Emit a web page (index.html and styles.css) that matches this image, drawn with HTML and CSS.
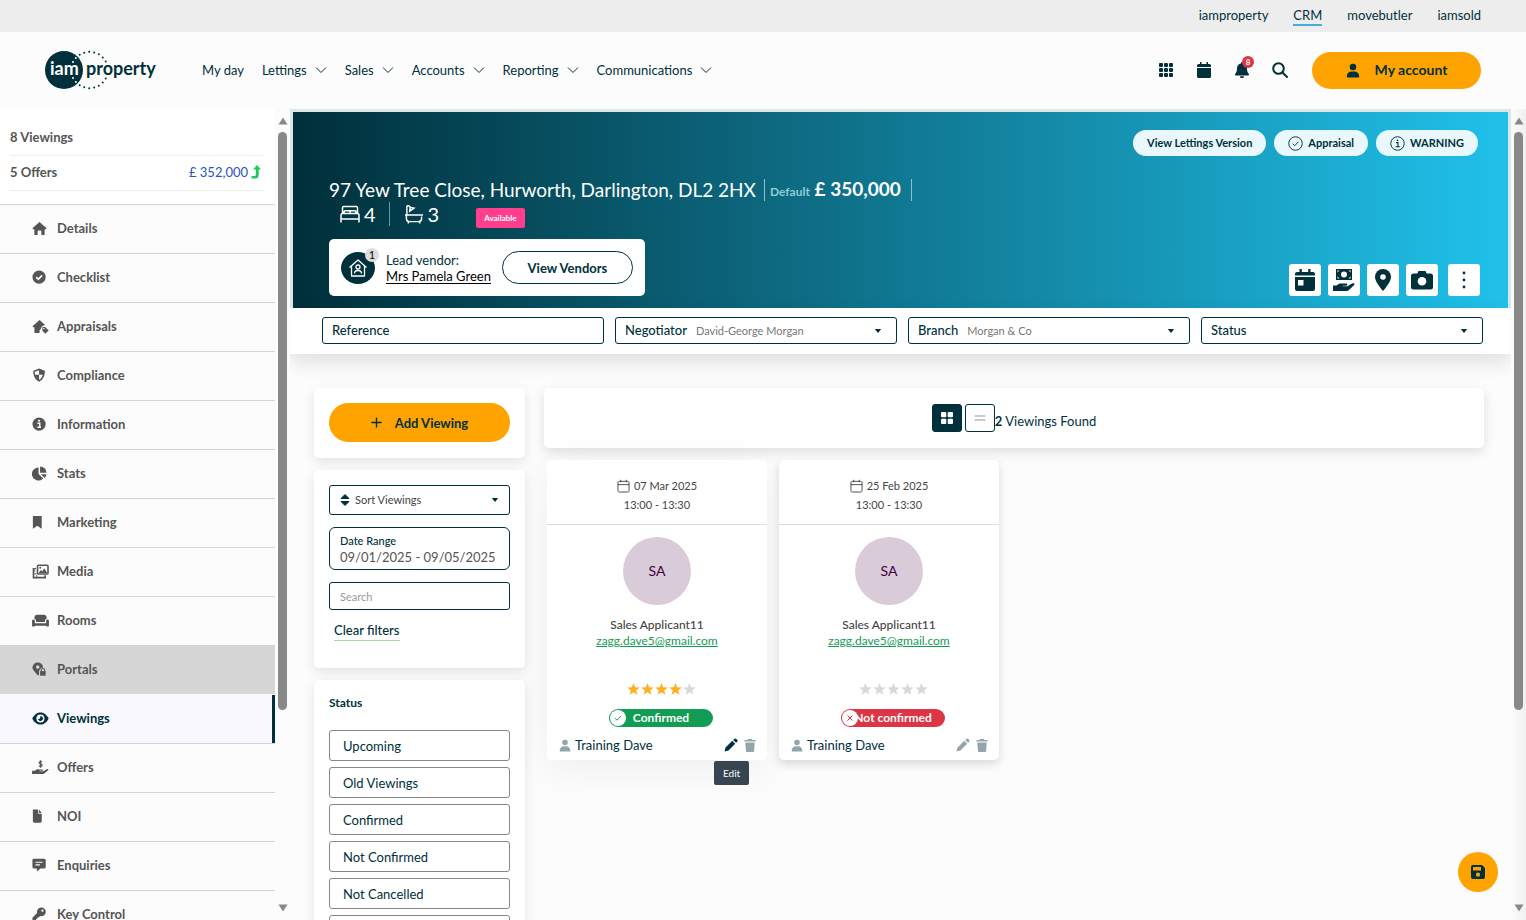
FILE: index.html
```html
<!DOCTYPE html>
<html lang="en">
<head>
    <meta charset="UTF-8">
    <meta name="viewport" content="width=device-width, initial-scale=1.0">
    <title>iamproperty CRM - Viewings</title>
    <link rel="stylesheet" href="styles.css">
</head>
<body>
    <!-- Icon sprite -->
    <svg class="sprite" aria-hidden="true">
        <symbol id="i-chevron" viewBox="0 0 12 8"><path d="M1 1.500l5 5 5-5" fill="none" stroke="currentColor"/></symbol>
        <symbol id="i-caret" viewBox="0 0 8 6"><path d="M.8 1h6.400L4 5z"/></symbol>
        <symbol id="i-grid" viewBox="0 0 16 16"><path d="M2 1h2a1 1 0 011 1v2a1 1 0 01-1 1H2a1 1 0 01-1-1V2a1 1 0 011-1zM7 1h2a1 1 0 011 1v2a1 1 0 01-1 1H7a1 1 0 01-1-1V2a1 1 0 011-1zM12 1h2a1 1 0 011 1v2a1 1 0 01-1 1h-2a1 1 0 01-1-1V2a1 1 0 011-1zM2 6h2a1 1 0 011 1v2a1 1 0 01-1 1H2a1 1 0 01-1-1V7a1 1 0 011-1zM7 6h2a1 1 0 011 1v2a1 1 0 01-1 1H7a1 1 0 01-1-1V7a1 1 0 011-1zM12 6h2a1 1 0 011 1v2a1 1 0 01-1 1h-2a1 1 0 01-1-1V7a1 1 0 011-1zM2 11h2a1 1 0 011 1v2a1 1 0 01-1 1H2a1 1 0 01-1-1v-2a1 1 0 011-1zM7 11h2a1 1 0 011 1v2a1 1 0 01-1 1H7a1 1 0 01-1-1v-2a1 1 0 011-1zM12 11h2a1 1 0 011 1v2a1 1 0 01-1 1h-2a1 1 0 01-1-1v-2a1 1 0 011-1z"/></symbol>
        <symbol id="i-calendar" viewBox="0 0 16 16"><path d="M4 0h1.500v2h5V0H12v2h1.500A1.500 1.500 0 0115 3.500V5H1V3.500A1.500 1.500 0 012.500 2H4zM1 6h14v8.500a1.500 1.500 0 01-1.500 1.500h-11A1.500 1.500 0 011 14.500z"/></symbol>
        <symbol id="i-bell" viewBox="0 0 16 16"><path d="M8 0a1 1 0 00-1 1v.6A5 5 0 003 6.500c0 2.700-.7 4-1.700 5.200C.7 12.400 1 13.500 2 13.500h12c1 0 1.300-1.100.7-1.800C13.700 10.500 13 9.200 13 6.500a5 5 0 00-4-4.900V1a1 1 0 00-1-1zM6 14.300a2 2 0 004 0z"/></symbol>
        <symbol id="i-search" viewBox="0 0 16 16"><g fill="none" stroke="currentColor" stroke-width="2" stroke-linecap="round"><circle cx="6.500" cy="6.500" r="5.300"/><path d="M10.500 10.500l4.500 4.500"/></g></symbol>
        <symbol id="i-user" viewBox="0 0 16 16"><circle cx="8" cy="4" r="3.700"/><path d="M1 15.500v-1A5.500 5.500 0 016.500 9h3a5.500 5.500 0 015.500 5.500v1a.5.5 0 01-.5.5h-13a.5.5 0 01-.5-.5z"/></symbol>
        <symbol id="i-up" viewBox="0 0 10 14"><path d="M6 0l4 4.500H7.700V10A3.500 3.500 0 014.200 13.500H.5V11H4a.8.8 0 00.8-.8V4.500H2z"/></symbol>
        <symbol id="i-home" viewBox="0 0 16 16" preserveAspectRatio="xMinYMid"><path d="M8 1l7.600 6.700-.9 1.100H13.500V14a1 1 0 01-1 1H10v-4a1 1 0 00-1-1H7a1 1 0 00-1 1v4H3.500a1 1 0 01-1-1V8.800H1.300L.4 7.700z"/></symbol>
        <symbol id="i-check" viewBox="0 0 17 17" preserveAspectRatio="xMinYMid"><circle cx="8" cy="8" r="7.500"/><path d="M4.800 8.200L7.200 10.500l4.200-4.400" fill="none" stroke="#fcfcfc" stroke-width="2"/></symbol>
        <symbol id="i-homeuser" viewBox="0 0 18 16"><path d="M8 1l6 5.300c-2.600.3-4.400 1.800-4.400 4.200L8 12v3H3.500a1 1 0 01-1-1V8.800H1.300L.4 7.700z"/><path d="M11 8.500h3l3.700 3.700-3.500 3.600L11 12.500z"/><circle cx="12.600" cy="10" r=".8" fill="#fcfcfc"/></symbol>
        <symbol id="i-shield" viewBox="0 0 17 17" preserveAspectRatio="xMinYMid"><path d="M8 .5l6.500 2.500c.3 5-1.500 10-6.500 12.500C3 13 1.200 8 1.500 3z"/><path d="M8 2.600v5H3.500c-.3-1.200-.3-2-.3-3.300zM8 7.600h4.300c-.7 2.600-2 4.600-4.300 5.700z" fill="#fcfcfc"/></symbol>
        <symbol id="i-info" viewBox="0 0 17 17" preserveAspectRatio="xMinYMid"><circle cx="8" cy="8" r="7.500"/><path d="M6.200 7h2.600v4.500M6 11.600h4.200" fill="none" stroke="#fcfcfc" stroke-width="1.600"/><circle cx="8" cy="4.200" r="1.200" fill="#fcfcfc"/></symbol>
        <symbol id="i-stats" viewBox="0 0 16 16" preserveAspectRatio="xMinYMid"><path d="M7 1.500V8.500l5 4.800A7 7 0 117 1.500z"/><path d="M8.600.5a7 7 0 016.900 6.700H8.600z"/><path d="M9.500 8.700h6a7 7 0 01-2 4z"/></symbol>
        <symbol id="i-bookmark" viewBox="2 0 16 17" preserveAspectRatio="xMinYMid"><path d="M3 1h10v14.500l-5-3.300-5 3.300z"/></symbol>
        <symbol id="i-media" viewBox="0 0 18 16"><path d="M4 5H1.500v9.500H14V12" fill="none" stroke="currentColor" stroke-width="1.700"/><path d="M1 7.500h2.500M1 10.500h4M5 14v-2" stroke="currentColor"/><rect x="5.800" y="1.300" width="11.200" height="9.400" rx="1.200" fill="none" stroke="currentColor" stroke-width="1.700"/><path d="M7 9.700l2.500-3.400 1.500 1.600L13 4.500l3.200 5.200z"/><circle cx="8.700" cy="4" r="1"/></symbol>
        <symbol id="i-sofa" viewBox="0 0 18 16"><path d="M2.500 6V5A3.200 3.200 0 015.700 1.800h6.600A3.200 3.200 0 0115.500 5v1a2.500 2.500 0 00-1.800 2.400V9.500H4.300V8.400A2.500 2.500 0 002.500 6z"/><path d="M0 8.500a1.500 1.500 0 013 0V11h12V8.500a1.500 1.500 0 013 0V13.500a1 1 0 01-1 1h-1.500L15 13.500H3l-.5 1H1a1 1 0 01-1-1z"/></symbol>
        <symbol id="i-portal" viewBox="0 0 17 17" preserveAspectRatio="xMinYMid"><path d="M6.500.5a6 6 0 016 5.600A4 4 0 008.600 9L8 9.500v4.800l-1 1.200C4 12 .5 9 .5 6.300A6 6 0 016.500.5z"/><circle cx="6.500" cy="5.800" r="2" fill="#d6d6d6"/><path d="M9.200 10.300h6.300v5.200H9.200z"/><path d="M10.500 10.500V9.200a1.900 1.900 0 013.800 0v1.300" fill="none" stroke="currentColor" stroke-width="1.200"/></symbol>
        <symbol id="i-eye" viewBox="0 0 18 16" preserveAspectRatio="xMinYMid"><path d="M9 1.500c4 0 7 2.800 8.700 6.500C16 11.700 13 14.500 9 14.500S2 11.700.3 8C2 4.300 5 1.500 9 1.500z"/><circle cx="9" cy="8" r="4.300" fill="#fff"/><path d="M9 5.300a2.700 2.700 0 11-2.600 3.300C8 8.800 9.200 7.500 9 5.300z"/></symbol>
        <symbol id="i-offer" viewBox="0 0 18 16"><path d="M0 11.500h3c1.500-1.500 3-1.700 4.500-1.500H11c1 0 1 1.500 0 1.500H8v.6h4l4.300-2.500c1-.5 1.700.7.800 1.400L13 14.500c-.5.400-1 .5-1.600.5H0z"/><path d="M10.700 2.200C9.800 1.300 7.500 1.300 7.500 2.800S10.800 4 10.800 5.600 8.200 7.200 7.200 6.100M9 .3v8" fill="none" stroke="currentColor" stroke-width="1.200"/></symbol>
        <symbol id="i-file" viewBox="2 0 16 17" preserveAspectRatio="xMinYMid"><path d="M4 .5h5V5.500h4V14a1.500 1.500 0 01-1.500 1.500h-7A1.500 1.500 0 013 14V1.500a1 1 0 011-1zM10 .5l3 4h-3z"/></symbol>
        <symbol id="i-message" viewBox="0 0 17 17" preserveAspectRatio="xMinYMid"><path d="M2 .8h12A1.500 1.500 0 0115.500 2.300v8A1.500 1.500 0 0114 11.800H9.500l-4 3.500v-3.500H2A1.500 1.500 0 01.5 10.300v-8A1.500 1.500 0 012 .8z"/><path d="M4 4.800h8M4 7.800h5" stroke="#fcfcfc" stroke-width="1.300"/></symbol>
        <symbol id="i-key" viewBox="0 0 17 17" preserveAspectRatio="xMinYMid"><path d="M10.500.5a5 5 0 11-1.300 9.800L7.500 12H6v1.500H4.500V15.500H.5v-3.300l5.300-5.400A5 5 0 0110.500.5z"/><circle cx="11.800" cy="4.200" r="1.300" fill="#fcfcfc"/></symbol>
        <symbol id="i-bed" viewBox="0 0 20 18"><g fill="none" stroke="currentColor" stroke-width="1.500"><path d="M2.500 8V2.300A1.200 1.200 0 013.700 1h12.600a1.200 1.200 0 011.200 1.300V8M1 17V9.500A1.500 1.500 0 012.500 8h15A1.500 1.500 0 0119 9.500V17M1 13.500h18M4 8V6.500A1.200 1.200 0 015.200 5.300h9.600A1.200 1.200 0 0116 6.500V8M10 5.300V8"/></g></symbol>
        <symbol id="i-bath" viewBox="0 0 20 20"><g fill="none" stroke="currentColor" stroke-width="1.500"><path d="M.5 10.500h19M2 10.500v3.700A3.300 3.300 0 005.300 17.500h9.400a3.300 3.300 0 003.300-3.300v-2M4 17.500V19.500M16 17.500V19.500M2.500 10V2.300A1.300 1.300 0 014.800 1.200L7 3M5.500 6.500L6 2.500l4 .8z"/></g></symbol>
        <symbol id="i-vendor" viewBox="0 0 20 20"><g fill="none" stroke="currentColor" stroke-width="1.300" stroke-linejoin="round"><path d="M1.500 9.500L10 2l8.500 7.500M3.500 8v10h13V8"/><circle cx="10" cy="9" r="2"/><path d="M6.500 15.500c0-4 7-4 7 0"/></g></symbol>
        <symbol id="i-checkline" viewBox="0 0 16 16"><g fill="none" stroke="currentColor"><circle cx="8" cy="8" r="7.200"/><path d="M5 8.200l2.200 2.100 4-4.200"/></g></symbol>
        <symbol id="i-infoline" viewBox="0 0 16 16"><g fill="none" stroke="currentColor"><circle cx="8" cy="8" r="7.200"/><path d="M6.500 7h2v4.500M6 11.500h4.500" stroke-width="1.200"/></g><circle cx="8" cy="4.600" r=".9"/></symbol>
        <symbol id="i-booking" viewBox="0 0 20 22"><path d="M4.500 0h2.300v3h6.400V0h2.300v3H18a2 2 0 012 2v1.500H0V5a2 2 0 012-2h2.500zM0 8h20v12a2 2 0 01-2 2H2a2 2 0 01-2-2z"/><rect x="3" y="11" width="5.500" height="5.500" fill="#fff"/></symbol>
        <symbol id="i-cash" viewBox="0 0 22 22"><path d="M3 0h16v11H3z"/><circle cx="11" cy="5.500" r="3" fill="#fff"/><path d="M4.500 1.500h2l-2 2zM17.500 1.500v2l-2-2zM4.500 9.500v-2l2 2zM17.500 9.500h-2l2-2z" fill="#fff"/><path d="M0 16.500h3.300c2-1.800 3.700-2.300 5.700-2h4.200c1.500 0 1.500 2.200 0 2.200H9.700v.6h4.600l5.200-3c1.600-.7 2.700 1 1.400 2L16 21c-.7.600-1.400 1-2.300 1H0z"/></symbol>
        <symbol id="i-pin" viewBox="0 0 16 22"><path d="M8 0a8 8 0 018 8c0 4-4.500 10-8 14C4.500 18 0 12 0 8a8 8 0 018-8z"/><circle cx="8" cy="8" r="2.800" fill="#fff"/></symbol>
        <symbol id="i-camera" viewBox="0 0 22 20"><path d="M7.500 1h7l1.200 2.500H19.500A2.500 2.500 0 0122 6v11a2.500 2.500 0 01-2.500 2.500h-17A2.500 2.500 0 010 17V6a2.500 2.500 0 012.500-2.500h3.800z"/><circle cx="11" cy="11.200" r="4.300" fill="#fff"/></symbol>
        <symbol id="i-dots" viewBox="0 0 4 18"><circle cx="2" cy="2" r="1.400"/><circle cx="2" cy="9" r="1.400"/><circle cx="2" cy="16" r="1.400"/></symbol>
        <symbol id="i-plus" viewBox="0 0 12 12"><path d="M6 .5v11M.5 6h11" stroke="currentColor" stroke-width="1.500"/></symbol>
        <symbol id="i-sort" viewBox="0 0 10 14"><path d="M5 1.500l4 4H1zM5 12.500l4-4H1z" stroke="currentColor" stroke-linejoin="round"/></symbol>
        <symbol id="i-tiles" viewBox="0 0 12 12"><rect width="5.300" height="5.300" rx="1"/><rect x="6.700" width="5.300" height="5.300" rx="1"/><rect y="6.700" width="5.300" height="5.300" rx="1"/><rect x="6.700" y="6.700" width="5.300" height="5.300" rx="1"/></symbol>
        <symbol id="i-lines" viewBox="0 0 12 8"><path d="M.5 2h11M.5 6h11" stroke="currentColor" stroke-width="1.500"/></symbol>
        <symbol id="i-date" viewBox="0 0 14 14"><g fill="none" stroke="currentColor"><rect x="1" y="2" width="12" height="11.500" rx="1.500"/><path d="M1 5.500h12M4 .3V3M10 .3V3"/></g></symbol>
        <symbol id="i-star" viewBox="0 0 14 14"><path d="M7 .5l1.800 4.600 4.900.3-3.800 3.100 1.300 4.800L7 10.600l-4.200 2.700 1.300-4.800L.3 5.400l4.900-.3z"/></symbol>
        <symbol id="i-tick" viewBox="0 0 10 10"><path d="M2 5.200l2 2 4-4.200" fill="none" stroke="currentColor"/></symbol>
        <symbol id="i-cross" viewBox="0 0 10 10"><path d="M2.500 2.500l5 5M7.500 2.500l-5 5" fill="none" stroke="currentColor"/></symbol>
        <symbol id="i-pencil" viewBox="0 0 14 14"><path d="M.5 13.500l1-4L8.300 2.800l2.900 2.900-6.700 6.800zM9.200 1.900l1-1a1.500 1.500 0 012.100 0l.8.8a1.500 1.500 0 010 2.100l-1 1z"/></symbol>
        <symbol id="i-trash" viewBox="0 0 12 14"><path d="M4 0h4l.6 1H12v1.800H0V1h3.400zM.9 3.800h10.200l-.7 9a1.300 1.300 0 01-1.300 1.200H2.900a1.300 1.300 0 01-1.300-1.200z"/></symbol>
        <symbol id="i-save" viewBox="0 0 14 14"><path fill-rule="evenodd" d="M1.800 0H11l3 3v9.200a1.800 1.800 0 01-1.800 1.800H1.800A1.800 1.800 0 010 12.200V1.800A1.800 1.800 0 011.800 0zM2 2v3.500h8V2zM7 7.600a2.100 2.100 0 100 4.200 2.100 2.100 0 000-4.200z"/></symbol>
        <symbol id="i-arrow" viewBox="0 0 10 8"><path d="M5 .5L9.500 7.500H.5z"/></symbol>
    </svg>

    <nav class="topbar" aria-label="Sites">
        <a href="#">iamproperty</a>
        <a href="#" class="current">CRM</a>
        <a href="#">movebutler</a>
        <a href="#">iamsold</a>
    </nav>

    <header class="header">
        <a href="#" class="logo" aria-label="iamproperty">
            <svg viewBox="0 0 114 40" width="114" height="40">
                <circle cx="19" cy="20" r="19" fill="#00303b"/>
                <clipPath id="disc"><circle cx="19" cy="20" r="19"/></clipPath>
                <g fill="none" stroke-width="2" stroke-linecap="round" stroke-dasharray="0 5">
                    <path d="M28 12A18.500 18.500 0 0161 12M28 28A18.500 18.500 0 0061 28" stroke="#00303b"/>
                    <path d="M28 12A18.500 18.500 0 0161 12M28 28A18.500 18.500 0 0061 28" stroke="#fff" clip-path="url(#disc)"/>
                </g>
                <text x="5" y="25" class="logo-iam">iam</text>
                <text x="41" y="25" class="logo-property">property</text>
            </svg>
        </a>
        <nav class="main-nav" aria-label="Main">
            <a href="#">My day</a>
            <button type="button">Lettings <svg><use href="#i-chevron"/></svg></button>
            <button type="button">Sales <svg><use href="#i-chevron"/></svg></button>
            <button type="button">Accounts <svg><use href="#i-chevron"/></svg></button>
            <button type="button">Reporting <svg><use href="#i-chevron"/></svg></button>
            <button type="button">Communications <svg><use href="#i-chevron"/></svg></button>
        </nav>
        <div class="header-tools">
            <button type="button" aria-label="Apps"><svg><use href="#i-grid"/></svg></button>
            <button type="button" aria-label="Calendar"><svg><use href="#i-calendar"/></svg></button>
            <button type="button" aria-label="Notifications"><svg><use href="#i-bell"/></svg><span class="count">8</span></button>
            <button type="button" aria-label="Search"><svg><use href="#i-search"/></svg></button>
        </div>
        <button type="button" class="account"><svg><use href="#i-user"/></svg>My account</button>
    </header>

    <div class="shell">
        <aside class="sidebar">
            <div class="summary">
                <div class="summary-row"><span>8 Viewings</span></div>
                <div class="summary-row"><span>5 Offers</span><span class="amount">£ 352,000 <svg><use href="#i-up"/></svg></span></div>
            </div>
            <nav class="side-nav" aria-label="Property">
                <a href="#"><svg><use href="#i-home"/></svg>Details</a>
                <a href="#"><svg><use href="#i-check"/></svg>Checklist</a>
                <a href="#"><svg><use href="#i-homeuser"/></svg>Appraisals</a>
                <a href="#"><svg><use href="#i-shield"/></svg>Compliance</a>
                <a href="#"><svg><use href="#i-info"/></svg>Information</a>
                <a href="#"><svg><use href="#i-stats"/></svg>Stats</a>
                <a href="#"><svg><use href="#i-bookmark"/></svg>Marketing</a>
                <a href="#"><svg><use href="#i-media"/></svg>Media</a>
                <a href="#"><svg><use href="#i-sofa"/></svg>Rooms</a>
                <a href="#" class="hovered"><svg><use href="#i-portal"/></svg>Portals</a>
                <a href="#" class="active"><svg><use href="#i-eye"/></svg>Viewings</a>
                <a href="#"><svg><use href="#i-offer"/></svg>Offers</a>
                <a href="#"><svg><use href="#i-file"/></svg>NOI</a>
                <a href="#"><svg><use href="#i-message"/></svg>Enquiries</a>
                <a href="#"><svg><use href="#i-key"/></svg>Key Control</a>
            </nav>
        </aside>
        <div class="scrollbar" aria-hidden="true">
            <svg><use href="#i-arrow"/></svg>
            <div class="track"><div class="thumb"></div></div>
            <svg class="down"><use href="#i-arrow"/></svg>
        </div>

        <main class="main">
            <section class="hero">
                <div class="pills">
                    <button type="button">View Lettings Version</button>
                    <button type="button"><svg><use href="#i-checkline"/></svg>Appraisal</button>
                    <button type="button"><svg><use href="#i-infoline"/></svg>WARNING</button>
                </div>
                <div class="title-row">
                    <h1>97 Yew Tree Close, Hurworth, Darlington, DL2 2HX</h1>
                    <div class="price"><small>Default</small> £ 350,000</div>
                </div>
                <div class="facts">
                    <span class="fact"><svg><use href="#i-bed"/></svg>4</span>
                    <span class="fact"><svg><use href="#i-bath"/></svg>3</span>
                    <span class="badge">Available</span>
                </div>
                <div class="hero-bottom">
                    <div class="vendor">
                        <div class="vendor-icon"><svg><use href="#i-vendor"/></svg><span>1</span></div>
                        <div class="vendor-text">Lead vendor:<br><a href="#">Mrs Pamela Green</a></div>
                        <button type="button">View Vendors</button>
                    </div>
                    <div class="actions">
                        <button type="button" aria-label="Book"><svg width="20" height="22"><use href="#i-booking"/></svg></button>
                        <button type="button" aria-label="Make offer"><svg width="22" height="22"><use href="#i-cash"/></svg></button>
                        <button type="button" aria-label="Map"><svg width="16" height="22"><use href="#i-pin"/></svg></button>
                        <button type="button" aria-label="Photos"><svg width="22" height="20"><use href="#i-camera"/></svg></button>
                        <button type="button" class="more" aria-label="More"><svg width="4" height="18"><use href="#i-dots"/></svg></button>
                    </div>
                </div>
            </section>

            <form class="filters">
                <div class="filter"><label for="reference">Reference</label><input type="text" id="reference"></div>
                <div class="filter"><label for="negotiator">Negotiator</label><select id="negotiator"><option>David-George Morgan</option></select><svg><use href="#i-caret"/></svg></div>
                <div class="filter"><label for="branch">Branch</label><select id="branch"><option>Morgan &amp; Co</option></select><svg><use href="#i-caret"/></svg></div>
                <div class="filter"><label for="status">Status</label><select id="status"><option></option></select><svg><use href="#i-caret"/></svg></div>
            </form>

            <div class="content">
                <div class="controls">
                    <div class="panel add-panel">
                        <button type="button" class="add"><svg><use href="#i-plus"/></svg>Add Viewing</button>
                    </div>
                    <div class="panel search-panel">
                        <div class="sort"><svg class="sort-icon"><use href="#i-sort"/></svg><select aria-label="Sort"><option>Sort Viewings</option></select><svg class="caret"><use href="#i-caret"/></svg></div>
                        <div class="date-range"><label for="range">Date Range</label><input type="text" id="range" value="09/01/2025 - 09/05/2025"></div>
                        <input type="search" class="search" placeholder="Search" aria-label="Search">
                        <a href="#" class="clear">Clear filters</a>
                    </div>
                    <div class="panel status-panel">
                        <h2>Status</h2>
                        <button type="button">Upcoming</button>
                        <button type="button">Old Viewings</button>
                        <button type="button">Confirmed</button>
                        <button type="button">Not Confirmed</button>
                        <button type="button">Not Cancelled</button>
                        <button type="button" aria-label="Cancelled"></button>
                    </div>
                </div>

                <div class="results">
                    <div class="toolbar">
                        <button type="button" class="view-btn selected" aria-label="Grid view"><svg width="12" height="12"><use href="#i-tiles"/></svg></button>
                        <button type="button" class="view-btn" aria-label="List view"><svg width="12" height="8"><use href="#i-lines"/></svg></button>
                        <p><b>2</b> Viewings Found</p>
                    </div>
                    <div class="cards">
                        <article class="card raised">
                            <div class="card-date">
                                <div><svg><use href="#i-date"/></svg>07 Mar 2025</div>
                                <div>13:00 - 13:30</div>
                            </div>
                            <div class="avatar">SA</div>
                            <div class="applicant">Sales Applicant11</div>
                            <a href="#" class="email">zagg.dave5@gmail.com</a>
                            <div class="stars">
                                <svg class="on"><use href="#i-star"/></svg><svg class="on"><use href="#i-star"/></svg><svg class="on"><use href="#i-star"/></svg><svg class="on"><use href="#i-star"/></svg><svg><use href="#i-star"/></svg>
                            </div>
                            <div class="state confirmed"><span><svg><use href="#i-tick"/></svg></span><b>Confirmed</b></div>
                            <div class="card-foot">
                                <svg class="agent"><use href="#i-user"/></svg>Training Dave
                                <button type="button" class="edit" aria-label="Edit"><svg><use href="#i-pencil"/></svg><span class="tooltip">Edit</span></button>
                                <button type="button" aria-label="Delete"><svg><use href="#i-trash"/></svg></button>
                            </div>
                        </article>
                        <article class="card">
                            <div class="card-date">
                                <div><svg><use href="#i-date"/></svg>25 Feb 2025</div>
                                <div>13:00 - 13:30</div>
                            </div>
                            <div class="avatar">SA</div>
                            <div class="applicant">Sales Applicant11</div>
                            <a href="#" class="email">zagg.dave5@gmail.com</a>
                            <div class="stars">
                                <svg><use href="#i-star"/></svg><svg><use href="#i-star"/></svg><svg><use href="#i-star"/></svg><svg><use href="#i-star"/></svg><svg><use href="#i-star"/></svg>
                            </div>
                            <div class="state declined"><span><svg><use href="#i-cross"/></svg></span><b>Not confirmed</b></div>
                            <div class="card-foot">
                                <svg class="agent"><use href="#i-user"/></svg>Training Dave
                                <button type="button" class="edit" aria-label="Edit"><svg><use href="#i-pencil"/></svg></button>
                                <button type="button" aria-label="Delete"><svg><use href="#i-trash"/></svg></button>
                            </div>
                        </article>
                    </div>
                </div>
            </div>
        </main>
        <div class="scrollbar page-scroll" aria-hidden="true">
            <svg><use href="#i-arrow"/></svg>
            <div class="track"><div class="thumb"></div></div>
            <svg class="down"><use href="#i-arrow"/></svg>
        </div>
    </div>

    <button type="button" class="save" aria-label="Save"><svg><use href="#i-save"/></svg></button>
</body>
</html>
```
FILE: styles.css
```css
* {
    margin: 0;
    padding: 0;
    box-sizing: border-box;
}

body {
    font-family: Lato, sans-serif;
    font-size: 13px;
    line-height: 16px;
    color: #00303b;
    background: #fcfcfc;
    height: 100vh;
    display: flex;
    flex-direction: column;
    overflow: hidden;
}

button, input, select {
    font: inherit;
    color: inherit;
    background: none;
    border: none;
    outline: none;
    appearance: none;
}

button {
    cursor: pointer;
}

a {
    color: inherit;
    text-decoration: none;
}

svg {
    fill: currentColor;
    flex-shrink: 0;
}

.sprite {
    display: none;
}

/* Top bar */
.topbar {
    height: 32px;
    flex-shrink: 0;
    background: #ededed;
    display: flex;
    justify-content: flex-end;
    align-items: center;
    gap: 25px;
    padding-right: 45px;
}

.topbar a {
    line-height: 18px;
    border-bottom: 2px solid transparent;
}

.topbar .current {
    border-color: #3fb1d8;
}

/* Header */
.header {
    height: 77px;
    flex-shrink: 0;
    display: flex;
    align-items: center;
    padding: 0 45px 1px;
}

.logo svg {
    display: block;
}

.logo-iam, .logo-property {
    font-size: 18px;
    font-weight: 700;
}

.logo-iam {
    fill: #fff;
}

.main-nav {
    display: flex;
    align-items: center;
    gap: 18px;
    margin-left: 43px;
}

.main-nav button {
    display: flex;
    align-items: center;
    gap: 8px;
}

.main-nav svg {
    width: 12px;
    height: 8px;
}

.header-tools {
    display: flex;
    gap: 22px;
    margin-left: auto;
}

.header-tools button {
    position: relative;
    display: flex;
}

.header-tools svg {
    width: 16px;
    height: 16px;
}

.count {
    position: absolute;
    top: -6px;
    right: -4px;
    width: 12px;
    height: 12px;
    border-radius: 50%;
    background: #dc3545;
    color: #fff;
    font-size: 8px;
    font-weight: 700;
    line-height: 12px;
}

.account {
    display: flex;
    align-items: center;
    justify-content: center;
    gap: 15px;
    width: 169px;
    height: 37px;
    margin-left: 24px;
    border-radius: 19px;
    background: #ffa300;
    font-size: 14px;
    font-weight: 700;
}

.account svg {
    width: 14px;
    height: 15px;
}

/* Shell */
.shell {
    flex: 1;
    min-height: 0;
    display: flex;
}

.sidebar {
    width: 275px;
    flex-shrink: 0;
    overflow: hidden;
    color: #555;
    font-weight: 700;
}

.summary {
    height: 95px;
    padding: 12px 10px 0;
    background: #fff;
}

.summary-row {
    height: 35px;
    display: flex;
    align-items: center;
    justify-content: space-between;
    padding-bottom: 2px;
    border-bottom: 1px solid #eee;
}

.amount {
    display: flex;
    align-items: center;
    gap: 3px;
    padding-right: 4px;
    color: #2a55c0;
    font-weight: 400;
}

.amount svg {
    width: 10px;
    height: 14px;
    color: #1fc95d;
}

.side-nav a {
    height: 49px;
    display: flex;
    align-items: center;
    gap: 8px;
    padding: 0 0 2px 32px;
    border-top: 1px solid #d3d3d3;
}

.side-nav svg {
    width: 17px;
    height: 15px;
}

.side-nav .hovered {
    background: #d6d6d6;
}

.side-nav .active {
    background: #f8f8fe;
    color: #00303b;
    border-top-color: #f8f8fe;
    box-shadow: inset -3px 0 #00303b;
}

.scrollbar {
    width: 15px;
    flex-shrink: 0;
    display: flex;
    flex-direction: column;
    align-items: center;
    padding: 8px 0;
    color: #888;
}

.scrollbar svg {
    width: 10px;
    height: 8px;
}

.scrollbar .down {
    transform: rotate(180deg);
}

.track {
    flex: 1;
    width: 9px;
    margin: 7px 0 2px;
}

.thumb {
    height: 75%;
    border-radius: 5px;
    background: #888;
}

.page-scroll {
    background: linear-gradient(to right, #fcfcfc, #f0f0f0);
}

/* Property banner */
.main {
    flex: 1;
    min-width: 0;
    overflow: hidden;
}

.hero {
    height: 199px;
    padding: 18px 28px 0 36px;
    border: 3px solid #dde6e8;
    border-bottom: none;
    background: linear-gradient(to right, #002f3a, #20c1ea) padding-box;
    color: #fff;
}

.pills {
    display: flex;
    justify-content: flex-end;
    gap: 8px;
    padding-right: 2px;
}

.pills button {
    display: flex;
    align-items: center;
    gap: 5px;
    height: 26px;
    padding: 0 14px;
    border-radius: 13px;
    background: #e9f8fc;
    color: #00303b;
    font-size: 11px;
    font-weight: 700;
}

.pills svg {
    width: 15px;
    height: 15px;
}

.title-row {
    display: flex;
    align-items: center;
    gap: 8px;
    margin-top: 22px;
    line-height: 24px;
}

h1 {
    font-size: 19px;
    font-weight: 400;
}

.price {
    font-size: 19px;
    font-weight: 700;
    line-height: 19px;
    padding: 0 10px 0 5px;
    border: solid #8fc0cc;
    border-width: 0 1px;
}

.price small {
    font-size: 12px;
    color: #8fcddb;
}

.facts {
    display: flex;
    align-items: flex-start;
    height: 28px;
    font-size: 20px;
    line-height: 24px;
    padding-left: 11px;
}

.fact {
    display: flex;
    align-items: center;
    gap: 4px;
}

.fact svg {
    width: 20px;
    height: 19px;
}

.fact + .fact {
    margin-left: 13px;
    padding-left: 14px;
    border-left: 1px solid #5b9aa8;
}

.badge {
    margin: 6px 0 0 37px;
    padding: 0 8px;
    border-radius: 2px;
    background: #ff3f8e;
    font-size: 8px;
    font-weight: 700;
    line-height: 20px;
}

.hero-bottom {
    display: flex;
    justify-content: space-between;
    align-items: flex-end;
    margin-top: 9px;
}

.vendor {
    display: flex;
    align-items: center;
    gap: 11px;
    height: 57px;
    padding: 0 12px;
    border-radius: 5px;
    background: #fff;
    color: #00303b;
}

.vendor-icon {
    position: relative;
    display: flex;
    align-items: center;
    justify-content: center;
    width: 34px;
    height: 32px;
    border-radius: 50%;
    background: #00303b;
    color: #fff;
}

.vendor-icon svg {
    width: 20px;
    height: 20px;
}

.vendor-icon span {
    position: absolute;
    top: -4px;
    right: -4px;
    width: 14px;
    height: 14px;
    border-radius: 50%;
    background: #ddd;
    color: #000;
    font-size: 11px;
    line-height: 14px;
    text-align: center;
}

.vendor-text a {
    color: #000;
    text-decoration: underline;
    text-underline-offset: 2px;
}

.vendor button {
    width: 131px;
    height: 33px;
    border: 1px solid #00303b;
    border-radius: 17px;
    font-weight: 700;
}

.actions {
    display: flex;
    gap: 7px;
}

.actions button {
    display: flex;
    align-items: center;
    justify-content: center;
    width: 32px;
    height: 32px;
    border-radius: 3px;
    background: #fff;
    color: #00303b;
}

.actions .more {
    margin-left: 3px;
}

/* Filter bar */
.filters {
    display: grid;
    grid-template-columns: repeat(4, 1fr);
    gap: 11px;
    height: 46px;
    padding: 9px 28px 10px 32px;
    background: #fff;
    box-shadow: 0 8px 20px rgba(0, 0, 0, 0.12);
}

.filter {
    display: flex;
    align-items: center;
    gap: 9px;
    min-width: 0;
    padding: 0 14px 0 9px;
    border: 1px solid #00303b;
    border-radius: 3px;
}

.filter label {
    padding-bottom: 2px;
    font-weight: 500;
}

.filter input, .filter select {
    flex: 1;
    min-width: 0;
    color: #777;
    font-size: 11px;
}

.filter svg, .sort .caret {
    width: 8px;
    height: 6px;
}

/* Content */
.content {
    display: grid;
    grid-template-columns: 211px 1fr;
    gap: 19px;
    padding: 34px 27px 0 24px;
}

.panel {
    margin-bottom: 12px;
    padding: 15px;
    border-radius: 5px;
    background: #fff;
    box-shadow: 0 4px 12px rgba(0, 0, 0, 0.1);
}

.add-panel {
    height: 70px;
}

.add {
    display: flex;
    align-items: center;
    justify-content: center;
    gap: 13px;
    width: 100%;
    height: 39px;
    border-radius: 20px;
    background: #ffa300;
    font-weight: 700;
}

.add svg {
    width: 11px;
    height: 11px;
}

.search-panel {
    height: 198px;
    display: flex;
    flex-direction: column;
    align-items: flex-start;
    gap: 12px;
}

.sort, .date-range, .search {
    width: 100%;
    padding: 0 10px;
    border: 1px solid #00303b;
    border-radius: 3px;
}

.sort {
    display: flex;
    align-items: center;
    gap: 5px;
    height: 30px;
    font-size: 11px;
    color: #444;
}

.sort svg {
    color: #00303b;
}

.sort-icon {
    width: 10px;
    height: 14px;
}

.sort select {
    flex: 1;
    min-width: 0;
}

.date-range {
    height: 43px;
    padding-top: 5px;
    border-radius: 6px;
}

.date-range label {
    display: block;
    font-size: 11px;
    font-weight: 500;
}

.date-range input {
    display: block;
    width: 100%;
    height: 16px;
    color: #555;
}

.search {
    height: 28px;
    font-size: 11px;
}

.search::placeholder {
    color: #999;
}

.clear {
    margin-left: 5px;
    padding-bottom: 2px;
    font-weight: 500;
    border-bottom: 1px solid #a5dba0;
}

.status-panel h2 {
    font-size: 12px;
    font-weight: 700;
    margin-bottom: 19px;
}

.status-panel button {
    display: block;
    width: 100%;
    height: 31px;
    margin-bottom: 6px;
    padding: 0 13px;
    border: 1px solid #888;
    border-radius: 3px;
    text-align: left;
}

.toolbar {
    display: flex;
    align-items: flex-start;
    justify-content: center;
    height: 60px;
    padding-top: 16px;
    border-radius: 5px;
    background: #fff;
    box-shadow: 0 4px 12px rgba(0, 0, 0, 0.12);
}

.view-btn {
    display: flex;
    align-items: center;
    justify-content: center;
    width: 30px;
    height: 28px;
    border: 1px solid #00303b;
    border-radius: 3px;
    color: #bbb;
    margin-right: 3px;
}

.view-btn + .view-btn {
    margin-right: 0;
}

.view-btn.selected {
    background: #00303b;
    color: #fff;
}

.toolbar p {
    line-height: 34px;
}

.cards {
    display: flex;
    gap: 12px;
    padding: 12px 3px;
}

.card {
    display: flex;
    flex-direction: column;
    align-items: center;
    width: 220px;
    height: 300px;
    border-radius: 5px;
    background: #fff;
    box-shadow: 0 4px 10px rgba(0, 0, 0, 0.14);
}

.card.raised {
    box-shadow: 0 8px 40px rgba(0, 0, 0, 0.06);
}

.card-date {
    width: 100%;
    height: 65px;
    padding-top: 16px;
    border-bottom: 1px solid #ddd;
    color: #444;
    font-size: 11px;
    line-height: 19px;
}

.card-date div {
    display: flex;
    align-items: center;
    justify-content: center;
    gap: 4px;
}

.card-date svg {
    width: 13px;
    height: 14px;
}

.avatar {
    width: 68px;
    height: 68px;
    margin: 12px 0;
    border-radius: 50%;
    background: #dacbd9;
    color: #400040;
    font-size: 14px;
    line-height: 68px;
    text-align: center;
}

.applicant {
    color: #444;
    font-size: 12px;
    font-weight: 500;
}

.email {
    color: #139c55;
    font-size: 12px;
    line-height: 15px;
    text-decoration: underline;
}

.stars {
    display: flex;
    gap: 1px;
    margin: 34px 0 0 8px;
    color: #d8d8d8;
}

.stars svg {
    width: 13px;
    height: 14px;
}

.stars .on {
    color: #fdb022;
}

.state {
    position: relative;
    width: 104px;
    height: 18px;
    margin: 13px 0 0 8px;
    border-radius: 9px;
    color: #fff;
    font-size: 12px;
    line-height: 18px;
    text-align: center;
}

.state span {
    position: absolute;
    top: 1px;
    left: 1px;
    display: flex;
    align-items: center;
    justify-content: center;
    width: 16px;
    height: 16px;
    border-radius: 50%;
    background: #fff;
}

.state svg {
    width: 10px;
    height: 10px;
}

.state b {
    position: relative;
}

.confirmed {
    background: #139c55;
}

.confirmed span {
    color: #139c55;
}

.declined {
    background: #dc3545;
}

.declined span {
    color: #dc3545;
}

.card-foot {
    display: flex;
    align-items: center;
    gap: 4px;
    width: 100%;
    padding: 10px 11px 0 12px;
}

.card-foot svg {
    display: block;
    width: 12px;
    height: 13px;
    color: #93a5aa;
}

.card-foot button {
    margin-left: 2px;
}

.card-foot .edit {
    position: relative;
    margin-left: auto;
}

.card-foot .edit svg {
    width: 14px;
    height: 14px;
}

.raised .edit svg {
    color: #00303b;
}

.tooltip {
    position: absolute;
    top: 23px;
    left: -10px;
    padding: 0 9px;
    border-radius: 2px;
    background: #36454f;
    color: #fff;
    font-size: 10px;
    line-height: 24px;
}

.save {
    position: fixed;
    right: 28px;
    bottom: 28px;
    display: flex;
    align-items: center;
    justify-content: center;
    width: 40px;
    height: 40px;
    border-radius: 50%;
    background: #ffa300;
}

.save svg {
    width: 14px;
    height: 14px;
}
```
